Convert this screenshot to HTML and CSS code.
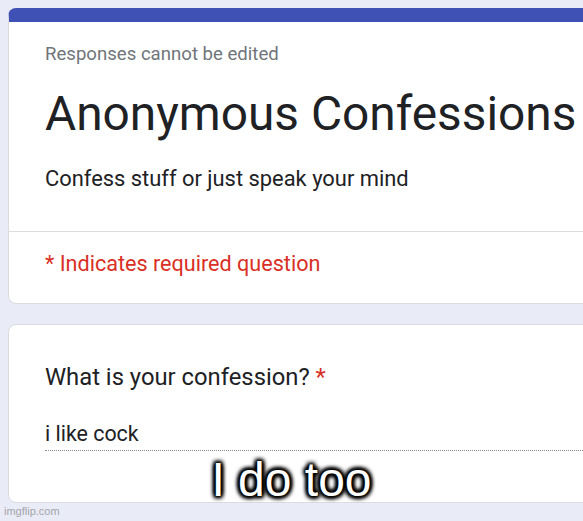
FILE: index.html
```html
<!DOCTYPE html>
<html>
<head>
<meta charset="utf-8">
<link rel="stylesheet" href="styles.css">
</head>
<body>
<div class="stage">
  <div class="card header-card">
    <div class="header-main">
      <div class="note">Responses cannot be edited</div>
      <h1 class="title">Anonymous Confessions</h1>
      <div class="desc">Confess stuff or just speak your mind</div>
    </div>
    <div class="header-req">* Indicates required question</div>
  </div>
  <div class="card question-card">
    <div class="question">What is your confession? <span class="star">*</span></div>
    <div class="answer">i like cock</div>
  </div>
  <div class="caption">I do too</div>
  <div class="watermark">imgflip.com</div>
</div>
</body>
</html>
```
FILE: styles.css
```css
html, body {
  margin: 0;
  padding: 0;
  width: 583px;
  height: 521px;
  overflow: hidden;
  background: #e9ebf6;
}
.stage {
  position: relative;
  width: 583px;
  height: 521px;
  overflow: hidden;
  padding: 8px 0 0 8px;
  box-sizing: border-box;
  display: flex;
  flex-direction: column;
  gap: 20px;
  font-family: Roboto, "Liberation Sans", sans-serif;
}
.card {
  width: 700px;
  background: #ffffff;
  border: 1px solid #dadce0;
  border-radius: 8px;
  box-sizing: border-box;
  flex: none;
}
.header-card {
  border-top: 14px solid #3f51b5;
}
.header-main {
  padding: 20px 36px 38px;
  border-bottom: 1px solid #dadce0;
}
.note {
  font-size: 18.6px;
  line-height: 24px;
  color: #70757a;
}
.title {
  margin: 20px 0 0;
  font-size: 47.8px;
  line-height: 56px;
  font-weight: 400;
  color: #202124;
  white-space: nowrap;
}
.desc {
  margin-top: 23px;
  font-size: 21.9px;
  line-height: 28px;
  color: #202124;
}
.header-req {
  padding: 18px 36px 25px;
  font-size: 21.6px;
  line-height: 28px;
  color: #d93025;
}
.question-card {
  padding: 37px 0 51px 36px;
}
.question {
  font-size: 23.8px;
  line-height: 30px;
  color: #202124;
}
.star {
  color: #d93025;
}
.answer {
  margin-top: 28px;
  font-size: 21.4px;
  line-height: 28px;
  padding-bottom: 2px;
  color: #202124;
  border-bottom: 1px dotted #8a8d91;
}
.caption {
  position: absolute;
  left: 0;
  right: 0;
  top: 456px;
  text-align: center;
  font-family: "Liberation Sans", Arial, sans-serif;
  font-size: 48px;
  line-height: 48px;
  color: #ffffff;
  text-shadow: 0 0 2px #000, 0 0 3px #000, 0 0 4px #000, 0 0 5px #000, 2px 2px 4px #000, -2px -2px 4px #000, 2px -2px 4px #000, -2px 2px 4px #000;
}
.watermark {
  position: absolute;
  left: 4px;
  top: 505px;
  font-family: "Liberation Sans", Arial, sans-serif;
  font-size: 11px;
  line-height: 13px;
  color: #a3a5ab;
}
```
